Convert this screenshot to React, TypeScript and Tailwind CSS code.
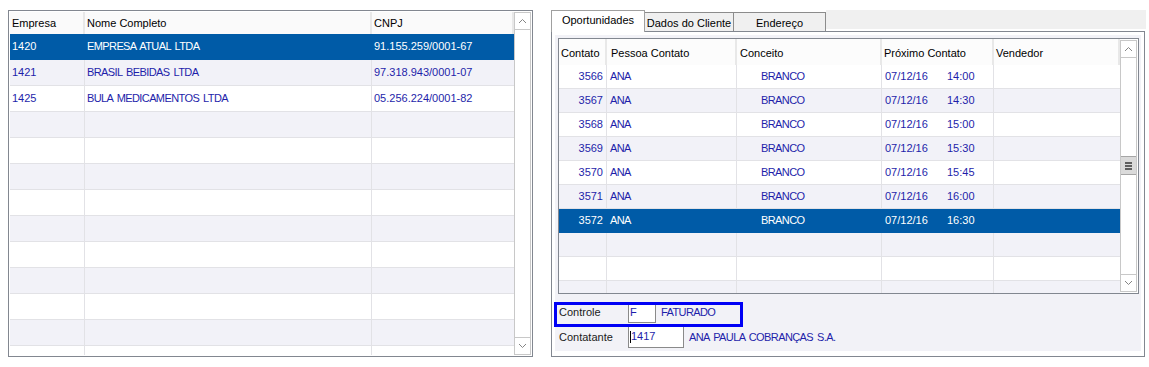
import React from "react";

const BLUE_TEXT = "text-[#1e1eaa]";
const CAPS = "tracking-[-0.6px] [word-spacing:1.5px]";

const empresas = [
  { id: "1420", nome: "EMPRESA ATUAL LTDA", cnpj: "91.155.259/0001-67" },
  { id: "1421", nome: "BRASIL BEBIDAS LTDA", cnpj: "97.318.943/0001-07" },
  { id: "1425", nome: "BULA MEDICAMENTOS LTDA", cnpj: "05.256.224/0001-82" },
];

const oportunidades = [
  { contato: "3566", pessoa: "ANA", conceito: "BRANCO", data: "07/12/16", hora: "14:00" },
  { contato: "3567", pessoa: "ANA", conceito: "BRANCO", data: "07/12/16", hora: "14:30" },
  { contato: "3568", pessoa: "ANA", conceito: "BRANCO", data: "07/12/16", hora: "15:00" },
  { contato: "3569", pessoa: "ANA", conceito: "BRANCO", data: "07/12/16", hora: "15:30" },
  { contato: "3570", pessoa: "ANA", conceito: "BRANCO", data: "07/12/16", hora: "15:45" },
  { contato: "3571", pessoa: "ANA", conceito: "BRANCO", data: "07/12/16", hora: "16:00" },
  { contato: "3572", pessoa: "ANA", conceito: "BRANCO", data: "07/12/16", hora: "16:30" },
];

function Chevron({ up }: { up?: boolean }) {
  return (
    <svg width="9" height="6" viewBox="0 0 9 6">
      <polyline
        points={up ? "1,5 4.5,1.5 8,5" : "1,1 4.5,4.5 8,1"}
        fill="none"
        stroke="#858585"
        strokeWidth="1"
      />
    </svg>
  );
}

function ScrollBar({ thumbTop }: { thumbTop?: number }) {
  return (
    <div className="w-[17px] h-full flex flex-col border border-[#c8c8c8] bg-white">
      <div className="h-[17px] shrink-0 border-b border-[#c8c8c8] flex items-center justify-center">
        <Chevron up />
      </div>
      <div className="flex-1 flex flex-col">
        {thumbTop !== undefined && (
          <div
            className="h-[19px] w-full bg-[#dadada] border-y border-[#a6a6a6] flex flex-col items-center justify-center gap-px"
            style={{ marginTop: thumbTop }}
          >
            <div className="w-[7px] h-[2px] bg-[#5f5f5f]" />
            <div className="w-[7px] h-[2px] bg-[#5f5f5f]" />
            <div className="w-[7px] h-[2px] bg-[#5f5f5f]" />
          </div>
        )}
      </div>
      <div className="h-[17px] shrink-0 border-t border-[#c8c8c8] flex items-center justify-center">
        <Chevron />
      </div>
    </div>
  );
}

function EmpresasGrid() {
  const rows = Array.from({ length: 13 }, (_, i) => empresas[i]);
  return (
    <div className="w-[525px] h-[347px] border border-[#828790] p-px flex bg-white">
      <div className="w-[504px] h-full overflow-hidden">
        {/* Header */}
        <div className="flex h-[22px] bg-[#fafafa] text-black">
          <div className="w-[75px] pl-[2px] pt-[1px] flex items-center border-r-2 border-[#e8e8e8]">Empresa</div>
          <div className="w-[287px] pl-[2px] pt-[1px] flex items-center border-r-2 border-[#e8e8e8]">Nome Completo</div>
          <div className="flex-1 pl-[2px] pt-[1px] flex items-center border-r-2 border-[#e8e8e8]">CNPJ</div>
        </div>
        {rows.map((r, i) => {
          const sel = i === 0;
          const bg = sel ? "bg-[#005ba7] text-white" : i % 2 ? `bg-[#f2f2f8] ${BLUE_TEXT}` : `bg-white ${BLUE_TEXT}`;
          const line = sel ? "border-[#005ba7]" : "border-[#e2e2e6]";
          return (
            <div key={i} className={`flex h-[26px] border-b ${line} ${bg}`}>
              <div className={`w-[75px] pl-[2px] flex items-center border-r ${line}`}>{r?.id}</div>
              <div className={`w-[287px] pl-[2px] flex items-center border-r ${line} ${CAPS}`}>{r?.nome}</div>
              <div className="flex-1 pl-[2px] flex items-center">{r?.cnpj}</div>
            </div>
          );
        })}
      </div>
      <ScrollBar />
    </div>
  );
}

function OportunidadesGrid() {
  const rows = Array.from({ length: 10 }, (_, i) => oportunidades[i]);
  return (
    <div className="w-[581px] h-[256px] border border-[#828790] flex bg-white">
      <div className="w-[561px] h-full overflow-hidden">
        <div className="flex h-[26px] bg-[#fcfcfc] text-black">
          <div className="w-[48px] pl-[2px] pt-[3px] flex items-center border-r-2 border-[#e8e8e8]">Contato</div>
          <div className="w-[130px] pl-[4px] pt-[3px] flex items-center border-r-2 border-[#e8e8e8]">Pessoa Contato</div>
          <div className="w-[145px] pl-[3px] pt-[3px] flex items-center border-r-2 border-[#e8e8e8]">Conceito</div>
          <div className="w-[112px] pl-[2px] pt-[3px] flex items-center border-r-2 border-[#e8e8e8]">Próximo Contato</div>
          <div className="flex-1 pl-[2px] pt-[3px] flex items-center border-r-2 border-[#e8e8e8]">Vendedor</div>
        </div>
        {rows.map((r, i) => {
          const sel = i === 6;
          const bg = sel ? "bg-[#005ba7] text-white" : i % 2 ? `bg-[#f2f2f8] ${BLUE_TEXT}` : `bg-white ${BLUE_TEXT}`;
          const line = sel ? "border-[#005ba7]" : "border-[#e2e2e6]";
          return (
            <div key={i} className={`flex h-[24px] border-b ${line} ${bg}`}>
              <div className={`w-[48px] pr-[3px] flex items-center justify-end border-r ${line}`}>{r?.contato}</div>
              <div className={`w-[130px] pl-[3px] flex items-center border-r ${line} ${CAPS}`}>{r?.pessoa}</div>
              <div className={`w-[145px] pl-[24px] flex items-center border-r ${line} ${CAPS}`}>{r?.conceito}</div>
              <div className={`w-[112px] pl-[3px] flex items-center border-r ${line}`}>
                {r && (
                  <>
                    <span className="w-[62px]">{r.data}</span>
                    <span>{r.hora}</span>
                  </>
                )}
              </div>
              <div className="flex-1" />
            </div>
          );
        })}
      </div>
      <div className="py-px h-full">
        <ScrollBar thumbTop={98} />
      </div>
    </div>
  );
}

function ClientePanel() {
  return (
    <div className="w-[595px] flex flex-col">
      {/* Tabs */}
      <div className="flex items-end h-[21px] relative z-10">
        <div className="w-[94px] h-[22px] -mb-px border border-b-0 border-[#a0a0a0] bg-white flex justify-center pt-[4px] text-black">
          Oportunidades
        </div>
        <div className="w-[89px] h-[19px] border border-b-0 border-l-0 border-[#8c8c8c] bg-[#f0f0f0] flex items-center justify-center pt-[2px] text-black">
          Dados do Cliente
        </div>
        <div className="w-[92px] h-[19px] border border-b-0 border-l-0 border-[#8c8c8c] bg-[#f0f0f0] flex items-center justify-center pt-[2px] text-black">
          Endereço
        </div>
        <div className="flex-1 h-[19px] self-start bg-[#f0f0f0]" />
      </div>
      {/* Tab body */}
      <div className="w-[594px] h-[326px] border border-[#828790] p-[3px] bg-white">
        <div className="relative h-[316px] bg-[#f2f2f7] pl-[3px] pt-[3px]">
          <OportunidadesGrid />
          <div className="flex items-center h-[21px] mt-[8px] pl-[1px]">
            <span className="w-[69px] text-[#1a1a1a]">Controle</span>
            <div className={`w-[28px] h-[21px] border border-[#8a8a8a] bg-white pl-[1px] flex items-center ${BLUE_TEXT}`}>
              F
            </div>
            <span className={`ml-[5px] ${BLUE_TEXT} ${CAPS}`}>FATURADO</span>
          </div>
          <div className="flex items-center h-[22px] mt-[3px] pl-[1px]">
            <span className="w-[69px] text-[#1a1a1a]">Contatante</span>
            <div className={`w-[56px] h-[22px] border border-[#8a8a8a] bg-white flex items-start ${BLUE_TEXT}`}>
              <span className="w-px h-[12px] bg-black mt-[4px] ml-px" />
              <span className="mt-[4px]">1417</span>
            </div>
            <span className={`ml-[5px] ${BLUE_TEXT} ${CAPS}`}>ANA PAULA COBRANÇAS S.A.</span>
          </div>
          {/* focus highlight over Controle */}
          <div className="absolute left-[-1px] top-[267px] w-[189px] h-[25px] border-[3px] border-[#0000f5]" />
        </div>
      </div>
    </div>
  );
}

export default function App() {
  return (
    <div className="w-[1149px] h-[367px] bg-white flex items-start pl-[8px] pt-[10px] text-[11px] leading-none font-['Liberation_Sans',Arial,sans-serif]">
      <EmpresasGrid />
      <div className="ml-[18px]">
        <ClientePanel />
      </div>
    </div>
  );
}
